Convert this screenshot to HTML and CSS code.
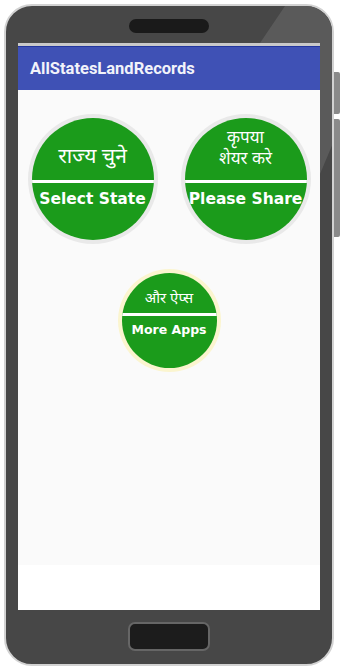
FILE: index.html
```html
<!DOCTYPE html>
<html lang="hi">
<head>
    <meta charset="UTF-8">
    <meta name="viewport" content="width=device-width, initial-scale=1.0">
    <title>AllStatesLandRecords</title>
    <link rel="stylesheet" href="styles.css">
</head>
<body>
    <div class="phone">
        <div class="sheen"></div>
        <div class="side-btn side-btn-top"></div>
        <div class="side-btn side-btn-bottom"></div>

        <div class="speaker"></div>

        <div class="screen">
            <div class="app-bar">AllStatesLandRecords</div>

            <div class="content">
                <div class="circle-row">
                    <button class="circle">
                        <div class="circle-top">राज्य चुने</div>
                        <div class="circle-line"></div>
                        <div class="circle-bottom">Select State</div>
                    </button>
                    <button class="circle">
                        <div class="circle-top two-line">
                            <span>कृपया</span>
                            <span>शेयर करे</span>
                        </div>
                        <div class="circle-line"></div>
                        <div class="circle-bottom">Please Share</div>
                    </button>
                </div>

                <button class="circle small">
                    <div class="circle-top">और ऐप्स</div>
                    <div class="circle-line"></div>
                    <div class="circle-bottom">More Apps</div>
                </button>
            </div>
            <div class="screen-footer"></div>
        </div>

        <div class="home-btn"></div>
    </div>
</body>
</html>
```

FILE: styles.css
```css
* {
    margin: 0;
    padding: 0;
    box-sizing: border-box;
}

body {
    font-family: 'Liberation Sans', Arial, sans-serif;
    background: #ffffff;
    width: 340px;
    height: 671px;
    overflow: hidden;
}

/* 폰 외곽 */
.phone {
    position: relative;
    width: 330px;
    height: 662px;
    margin: 4px 0 0 4px;
    border: 2px solid #d2d2d2;
    border-radius: 28px;
    background: #474747;
    display: flex;
    flex-direction: column;
    align-items: center;
}

.sheen {
    position: absolute;
    inset: 0;
    border-radius: 26px;
    background: #5a5a5a;
    clip-path: polygon(279px 0, 330px 0, 330px 130px, 314px 168px, 314px 37px, 254px 37px);
}

.side-btn {
    position: absolute;
    right: -8px;
    width: 6px;
    background: #8a8a8a;
    border-radius: 0 2px 2px 0;
}

.side-btn-top {
    top: 66px;
    height: 42px;
}

.side-btn-bottom {
    top: 113px;
    height: 118px;
}

.speaker {
    position: relative;
    width: 80px;
    height: 14px;
    margin-top: 13px;
    border-radius: 7px;
    background: #1a1a1a;
}

/* 화면 */
.screen {
    position: relative;
    width: 302px;
    height: 567px;
    margin-top: 10px;
    border-top: 3px solid #c9c9c9;
    display: flex;
    flex-direction: column;
}

.app-bar {
    height: 44px;
    border-top: 1px solid #22369e;
    background: #3f51b5;
    color: #f2f3fa;
    font-family: Roboto, 'Liberation Sans', sans-serif;
    font-weight: bold;
    font-size: 16.5px;
    display: flex;
    align-items: center;
    padding-left: 12px;
    padding-bottom: 1px;
}

.content {
    height: 475px;
    background: #fafafa;
    display: flex;
    flex-direction: column;
    align-items: center;
    padding-top: 28px;
}

.screen-footer {
    flex: 1;
    background: #ffffff;
}

.circle-row {
    display: flex;
    justify-content: center;
    gap: 31px;
}

.circle {
    width: 122px;
    height: 122px;
    border: none;
    border-radius: 50%;
    background: #1b9b1b;
    box-shadow: 0 0 0 4px #e9e9e9;
    color: #ffffff;
    display: flex;
    flex-direction: column;
    overflow: hidden;
    font-family: 'DejaVu Sans', Verdana, sans-serif;
    cursor: pointer;
}

.circle-top {
    height: 62px;
    display: flex;
    align-items: flex-end;
    justify-content: center;
    padding-bottom: 11px;
    font-family: 'Noto Sans Devanagari', 'Noto Sans', sans-serif;
    font-size: 21px;
    line-height: 22px;
    text-align: center;
}

.circle-top.two-line {
    flex-direction: column;
    align-items: center;
    justify-content: flex-end;
    font-size: 17px;
    line-height: 21px;
    padding-bottom: 9px;
}

.circle-line {
    height: 3px;
    background: #ffffff;
}

.circle-bottom {
    padding-top: 6px;
    font-size: 15.5px;
    font-weight: bold;
    line-height: 20px;
    text-align: center;
    white-space: nowrap;
}

.circle.small {
    width: 95px;
    height: 95px;
    margin-top: 33px;
    box-shadow: 0 0 0 4px #fbf5cf;
}

.circle.small .circle-top {
    height: 40px;
    font-size: 15px;
    line-height: 18px;
    padding-bottom: 4px;
}

.circle.small .circle-bottom {
    padding-top: 4px;
    font-size: 12.5px;
}

.home-btn {
    position: relative;
    width: 82px;
    height: 29px;
    margin-top: 12px;
    border: 2px solid #666666;
    border-radius: 7px;
    background: #1c1c1c;
}
```
